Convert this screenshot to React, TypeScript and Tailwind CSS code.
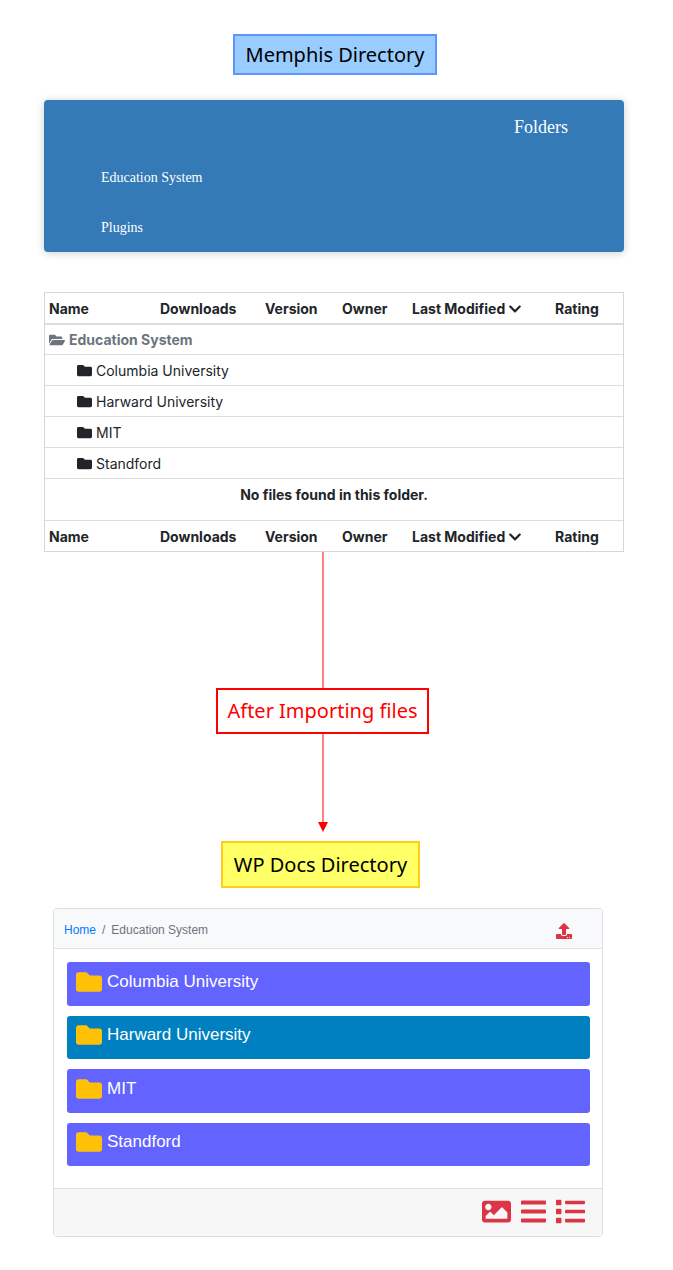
import React from "react";
import {
  FaBars,
  FaChevronDown,
  FaFolder,
  FaFolderOpen,
  FaImage,
  FaList,
  FaUpload,
} from "react-icons/fa";

const universities = ["Columbia University", "Harward University", "MIT", "Standford"];
const columns = ["Name", "Downloads", "Version", "Owner", "Last Modified", "Rating"];

function ColumnHeadings() {
  return (
    <tr>
      {columns.map((name) => (
        <th key={name} scope="col" className="h-[30px] whitespace-nowrap px-1 pt-0.5 text-left font-bold">
          {name}
          {name === "Last Modified" && (
            <FaChevronDown className="ml-[3px] inline-block size-[14px] align-[-2px]" aria-hidden="true" />
          )}
        </th>
      ))}
    </tr>
  );
}

function MemphisFolders() {
  return (
    <nav
      aria-label="Folders"
      className="mt-[25px] h-[152px] rounded bg-[#337ab7] font-['Liberation_Serif',serif] text-white shadow-[0_1px_8px_rgba(0,0,0,0.2)]"
    >
      <h2 className="pr-14 pt-[13px] text-right text-lg leading-7">Folders</h2>
      <ul className="pl-[57px] pt-3 text-sm">
        <li className="h-[50px] leading-[50px]">
          <a href="#education">Education System</a>
        </li>
        <li className="h-[50px] leading-[50px]">
          <a href="#plugins">Plugins</a>
        </li>
      </ul>
    </nav>
  );
}

function MemphisTable() {
  return (
    <div className="mt-10 border border-[#dad7cd]">
      <table className="w-full table-fixed border-separate border-spacing-0 font-[Inter,sans-serif] text-sm leading-5 text-[#212529]">
        <colgroup>
          <col className="w-[111px]" />
          <col className="w-[105px]" />
          <col className="w-[77px]" />
          <col className="w-[70px]" />
          <col className="w-[143px]" />
          <col className="w-[72px]" />
        </colgroup>
        <thead>
          <ColumnHeadings />
        </thead>
        <tbody>
          <tr>
            <td colSpan={6} className="h-[32px] border-b border-t-2 border-[#dddddd] px-1 font-bold text-[#6c757d]">
              <FaFolderOpen className="mr-1 inline-block size-4 align-[-3px]" aria-hidden="true" />
              Education System
            </td>
          </tr>
          {universities.map((name) => (
            <tr key={name}>
              <td colSpan={6} className="h-[31px] border-b border-[#dddddd] pl-8 pt-px">
                <FaFolder className="mr-1 inline-block size-[15px] align-[-2px]" aria-hidden="true" />
                {name}
              </td>
            </tr>
          ))}
          <tr>
            <td colSpan={6} className="h-[42px] border-b border-[#dddddd] pb-[9px] text-center font-bold">
              No files found in this folder.
            </td>
          </tr>
        </tbody>
        <tfoot>
          <ColumnHeadings />
        </tfoot>
      </table>
    </div>
  );
}

function ImportArrow() {
  return (
    <div className="flex flex-col items-center pr-[23px]">
      <div className="h-[136px] w-0.5 bg-[#ff8080]" />
      <p className="w-[213px] border-2 border-[#ff0000] bg-white text-center leading-[42px] text-[#ff0000]">
        After Importing files
      </p>
      <div className="h-[88px] w-0.5 bg-[#ff8080]" />
      <svg viewBox="0 0 10 10" className="h-2.5 w-2.5" aria-hidden="true">
        <path d="M0 0h10L5 10z" fill="#ff0000" />
      </svg>
    </div>
  );
}

function DocsPanel() {
  return (
    <section className="ml-[9px] mr-[21px] mt-5 overflow-hidden rounded-sm border border-[#dcdee0] font-['Liberation_Sans',sans-serif]">
      <header className="flex h-10 items-center justify-between border-b border-[#dee2e6] bg-[#f8f9fa] pl-2.5 pr-[30px] text-xs text-[#6c757d]">
        <nav aria-label="Breadcrumb" className="flex gap-1.5 pt-[3px]">
          <a href="#home" className="text-[#007bff]">Home</a>
          <span>/</span>
          <span>Education System</span>
        </nav>
        <button type="button" aria-label="Upload" className="pt-1 text-[#dc3545]">
          <FaUpload className="size-4" />
        </button>
      </header>
      <ul className="grid h-[239px] auto-rows-fr gap-2.5 pb-[22px] pl-[13px] pr-3 pt-[13px] text-[17px] text-white">
        {universities.map((name) => (
          <li key={name}>
            <a
              href="#folder"
              className={
                name === "Harward University"
                  ? "flex h-full items-center gap-[5px] rounded-[3px] bg-[#0080c0] pb-1 pl-[9px]"
                  : "flex h-full items-center gap-[5px] rounded-[3px] bg-[#6363ff] pb-1 pl-[9px]"
              }
            >
              <FaFolder className="size-[26px] text-[#ffc107]" aria-hidden="true" />
              {name}
            </a>
          </li>
        ))}
      </ul>
      <footer className="flex h-12 items-center justify-end gap-2.5 border-t border-[#dcdee0] bg-[#f7f7f7] pb-0.5 pr-[17px] text-[#dc3545]">
        <button type="button" aria-label="Gallery view">
          <FaImage className="size-[29px]" />
        </button>
        <button type="button" aria-label="Compact view">
          <FaBars className="h-[29px] w-[25px]" />
        </button>
        <button type="button" aria-label="List view">
          <FaList className="size-[29px]" />
        </button>
      </footer>
    </section>
  );
}

export default function App() {
  return (
    <main className="min-h-screen bg-white pb-8 pl-11 pr-[49px] pt-[34px] font-['Noto_Sans',sans-serif] text-xl text-black">
      <div className="pl-0.5">
        <h1 className="mx-auto w-[204px] border-2 border-[#5c95ff] bg-[#99ccff] text-center leading-[37px]">
          Memphis Directory
        </h1>
      </div>
      <MemphisFolders />
      <MemphisTable />
      <ImportArrow />
      <div className="pr-[27px] pt-[9px]">
        <h1 className="mx-auto w-[199px] border-2 border-[#ffcc1a] bg-[#ffff66] text-center leading-[43px]">
          WP Docs Directory
        </h1>
      </div>
      <DocsPanel />
    </main>
  );
}
